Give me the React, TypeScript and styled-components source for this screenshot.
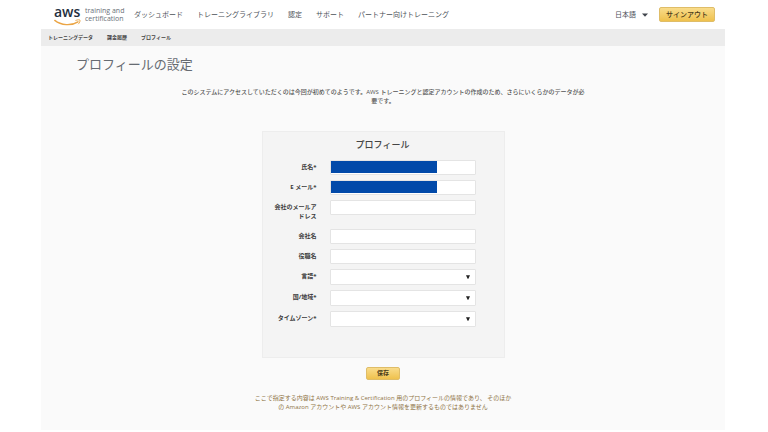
import React from 'react';
import styled, { createGlobalStyle } from 'styled-components';

const GlobalStyle = createGlobalStyle`
  *, *::before, *::after { box-sizing: border-box; }
  body {
    margin: 0;
    background: #fff;
    color: #444;
    font-family: 'Open Sans', 'Noto Sans CJK JP', sans-serif;
    font-size: 6px;
    line-height: 9px;
  }
  button, input, select { font: inherit; color: inherit; }
  a { color: inherit; text-decoration: none; }
`;

const Site = styled.div`
  margin: 0 43px 2px 41px;
`;

const Header = styled.header`
  display: flex;
  align-items: center;
  height: 29px;
  padding: 0 10px 0 13px;
  background: #fff;
`;

const Logo = styled.a`
  display: flex;
  align-items: center;
  gap: 4px;
  width: 80px;
`;

const LogoMark = styled.span`
  display: flex;
  flex-direction: column;
  align-items: flex-start;
  width: 27px;
  padding-top: 1px;
  flex: none;
  color: #252f3e;
  font-size: 14px;
  font-weight: 600;
  line-height: 14px;
`;

const Smile = styled.svg`
  display: block;
  width: 27px;
  height: 7px;
  fill: none;
  stroke: #eba545;
  stroke-linecap: round;
`;

const LogoText = styled.span`
  padding-top: 1px;
  color: #6a7078;
  font-size: 7px;
  line-height: 8px;
  white-space: nowrap;
`;

const MainNav = styled.nav`
  display: flex;
  gap: 14px;
  flex: 1;
  color: #4c5158;
  font-size: 7px;
  white-space: nowrap;
`;

const Language = styled.button`
  display: flex;
  align-items: center;
  gap: 6px;
  margin-right: 11px;
  padding: 0;
  border: 0;
  background: none;
  color: #4c5158;
  font-size: 7px;
`;

const Caret = styled.svg`
  display: block;
  width: 6px;
  height: 4px;
  fill: #40454c;
`;

const GoldButton = styled.button<{ $size: 'small' | 'large' }>`
  height: ${(p) => (p.$size === 'large' ? 15 : 13)}px;
  min-width: ${(p) => (p.$size === 'large' ? 56 : 34)}px;
  padding: 0 6px;
  border: 1px solid #dfbd68;
  border-radius: 2px;
  background: linear-gradient(#f9dc8b, #efc14d);
  color: #4a3b18;
  font-size: ${(p) => (p.$size === 'large' ? 7 : 6)}px;
  font-weight: ${(p) => (p.$size === 'large' ? 500 : 700)};
  line-height: 11px;
`;

const SubNav = styled.nav`
  display: flex;
  align-items: center;
  gap: 14px;
  height: 17px;
  padding: 0 7px;
  background: #ececec;
  color: #444;
  font-size: 5px;
  font-weight: 700;
`;

const Main = styled.main`
  display: flex;
  flex-direction: column;
  align-items: center;
  padding: 8px 35px 18px;
  background: #fafafa;
`;

const PageTitle = styled.h1`
  align-self: stretch;
  margin: 0 0 14px;
  color: #666b72;
  font-size: 13px;
  font-weight: 400;
  line-height: 20px;
`;

const Intro = styled.p`
  max-width: 406px;
  margin: 0 0 25px;
  color: #555;
  font-weight: 500;
  text-align: center;
`;

const ProfileForm = styled.form`
  display: flex;
  flex-direction: column;
  align-items: center;
  gap: 9px;
`;

const Card = styled.fieldset`
  display: flex;
  flex-direction: column;
  gap: 5px;
  min-width: 0;
  margin: 0;
  padding: 6px 28px 30px 12px;
  border: 1px solid #ededed;
  background: #f4f4f4;
`;

const CardTitle = styled.h2`
  margin: 0 0 4px;
  padding-left: 15px;
  color: #444;
  font-size: 9px;
  font-weight: 500;
  line-height: 13px;
  text-align: center;
`;

const FieldRow = styled.div`
  display: grid;
  grid-template-columns: 42px minmax(0, 146px);
  column-gap: 13px;
`;

const Label = styled.label`
  padding: 3px 0;
  color: #3c3c3c;
  font-weight: 700;
  text-align: right;
`;

const Control = styled.div`
  position: relative;
`;

const TextBox = styled.input`
  display: block;
  width: 100%;
  height: 15px;
  padding: 0 3px;
  border: 1px solid #e4e4e4;
  border-radius: 1px;
  background: #fff;
`;

const DropDown = styled.select`
  display: block;
  width: 100%;
  height: 16px;
  padding: 0 12px 0 3px;
  border: 1px solid #e4e4e4;
  border-radius: 1px;
  background: #fff;
  appearance: none;
`;

const Arrow = styled.svg`
  position: absolute;
  top: 6px;
  right: 6px;
  width: 4px;
  height: 4px;
  fill: #222;
  pointer-events: none;
`;

const Mask = styled.span`
  position: absolute;
  top: 1px;
  bottom: 2px;
  left: 1px;
  width: 106px;
  background: #0149a9;
`;

const Note = styled.p`
  max-width: 262px;
  margin: 14px 0 0;
  color: #8f7446;
  text-align: center;
`;

type Field = {
  id: string;
  label: string;
  kind: 'text' | 'select';
  masked?: boolean;
};

const fields: Field[] = [
  { id: 'name', label: '氏名*', kind: 'text', masked: true },
  { id: 'email', label: 'E メール*', kind: 'text', masked: true },
  { id: 'work-email', label: '会社のメールアドレス', kind: 'text' },
  { id: 'company', label: '会社名', kind: 'text' },
  { id: 'job-title', label: '役職名', kind: 'text' },
  { id: 'language', label: '言語*', kind: 'select' },
  { id: 'region', label: '国/地域*', kind: 'select' },
  { id: 'time-zone', label: 'タイムゾーン*', kind: 'select' },
];

const mainLinks = ['ダッシュボード', 'トレーニングライブラリ', '認定', 'サポート', 'パートナー向けトレーニング'];
const subLinks = ['トレーニングデータ', '課金履歴', 'プロフィール'];

function AwsMark() {
  return (
    <LogoMark>
      aws
      <Smile viewBox="0 0 27 7" aria-hidden="true">
        <path d="M0.8 1.4C7 6.6 17.5 7 24 2.8" strokeWidth="1.4" />
        <path d="M21.8 1.4C23.4 0.7 25.4 0.6 26 1.1C26.3 2 25.6 3.9 24.5 4.9" strokeWidth="0.9" />
      </Smile>
    </LogoMark>
  );
}

function FormField({ field }: { field: Field }) {
  return (
    <FieldRow>
      <Label htmlFor={field.id}>{field.label}</Label>
      <Control>
        {field.kind === 'text' ? (
          <TextBox id={field.id} type="text" />
        ) : (
          <>
            <DropDown id={field.id} defaultValue="">
              <option value="" />
            </DropDown>
            <Arrow viewBox="0 0 4 4" aria-hidden="true">
              <path d="M0 0.3H4L2.4 3.7H1.6Z" />
            </Arrow>
          </>
        )}
        {field.masked && <Mask />}
      </Control>
    </FieldRow>
  );
}

export default function App() {
  return (
    <>
      <GlobalStyle />
      <Site>
        <Header>
          <Logo href="#">
            <AwsMark />
            <LogoText>
              training and
              <br />
              certification
            </LogoText>
          </Logo>
          <MainNav>
            {mainLinks.map((text) => (
              <a href="#" key={text}>{text}</a>
            ))}
          </MainNav>
          <Language type="button">
            日本語
            <Caret viewBox="0 0 6 4" aria-hidden="true">
              <path d="M0 0.5H6L3 3.7Z" />
            </Caret>
          </Language>
          <GoldButton type="button" $size="large">サインアウト</GoldButton>
        </Header>
        <SubNav>
          {subLinks.map((text) => (
            <a href="#" key={text}>{text}</a>
          ))}
        </SubNav>
        <Main>
          <PageTitle>プロフィールの設定</PageTitle>
          <Intro>
            このシステムにアクセスしていただくのは今回が初めてのようです。AWS トレーニングと認定アカウントの作成のため、さらにいくらかのデータが必要です。
          </Intro>
          <ProfileForm onSubmit={(event) => event.preventDefault()}>
            <Card>
              <CardTitle>プロフィール</CardTitle>
              {fields.map((field) => (
                <FormField field={field} key={field.id} />
              ))}
            </Card>
            <GoldButton type="submit" $size="small">保存</GoldButton>
          </ProfileForm>
          <Note>
            ここで指定する内容は AWS Training &amp; Certification 用のプロフィールの情報であり、 そのほかの Amazon アカウントや AWS アカウント情報を更新するものではありません
          </Note>
        </Main>
      </Site>
    </>
  );
}
